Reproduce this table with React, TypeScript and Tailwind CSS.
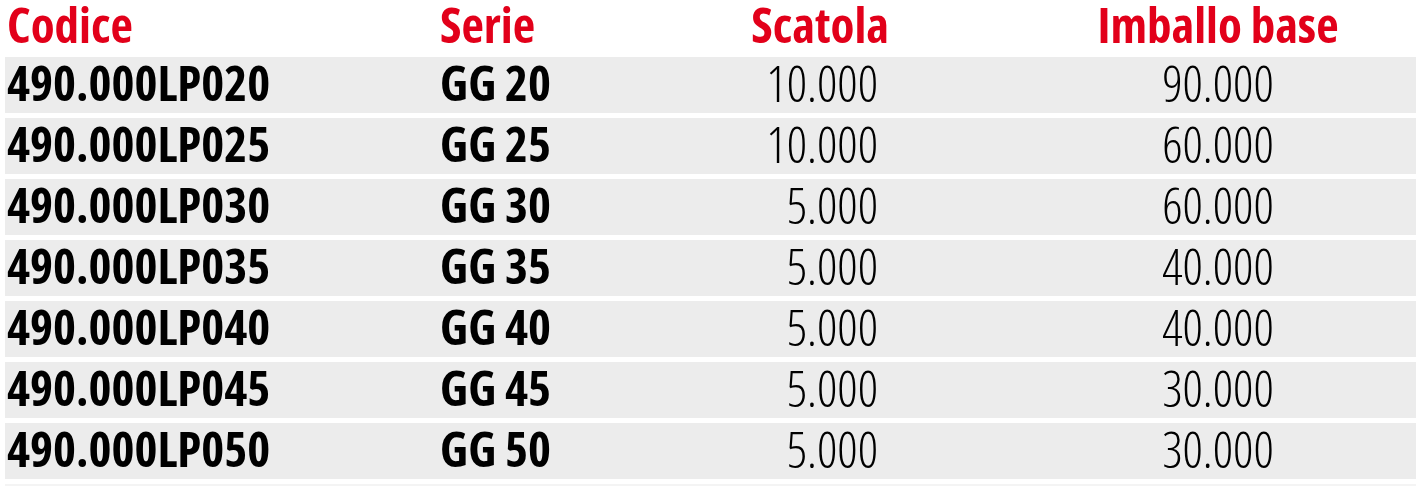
import React from "react";

const rows = [
  ["490.000LP020", "GG 20", "10.000", "90.000"],
  ["490.000LP025", "GG 25", "10.000", "60.000"],
  ["490.000LP030", "GG 30", "5.000", "60.000"],
  ["490.000LP035", "GG 35", "5.000", "40.000"],
  ["490.000LP040", "GG 40", "5.000", "40.000"],
  ["490.000LP045", "GG 45", "5.000", "30.000"],
  ["490.000LP050", "GG 50", "5.000", "30.000"],
];

export default function App() {
  return (
    <div
      className="w-[1416px] h-[486px] overflow-hidden bg-white"
      style={{ fontFamily: '"Open Sans", sans-serif' }}
    >
      <div className="flex h-[57px] items-start pl-[7px] text-[49px] leading-[49px] font-bold text-[#e2001a] [font-stretch:75%]">
        <div className="w-[433px] shrink-0">Codice</div>
        <div className="w-[260px] shrink-0">Serie</div>
        <div className="w-[189px] shrink-0 text-right">Scatola</div>
        <div className="w-[658px] shrink-0 text-center">Imballo base</div>
      </div>
      {rows.map((r) => (
        <div
          key={r[0]}
          className="flex h-[56px] mb-[5px] ml-[5px] pl-[2px] bg-[#ececec] items-start text-black [font-stretch:75%]"
        >
          <div className="w-[433px] shrink-0 font-bold text-[49px] leading-[50px]">{r[0]}</div>
          <div className="w-[260px] shrink-0 font-bold text-[49px] leading-[50px]">{r[1]}</div>
          <div className="w-[178px] shrink-0 text-right font-light text-[50px] leading-[53px]">{r[2]}</div>
          <div className="w-[680px] shrink-0 text-center font-light text-[50px] leading-[53px]">{r[3]}</div>
        </div>
      ))}
      <div className="h-[56px] ml-[5px] bg-[#f4f4f4]" />
    </div>
  );
}
